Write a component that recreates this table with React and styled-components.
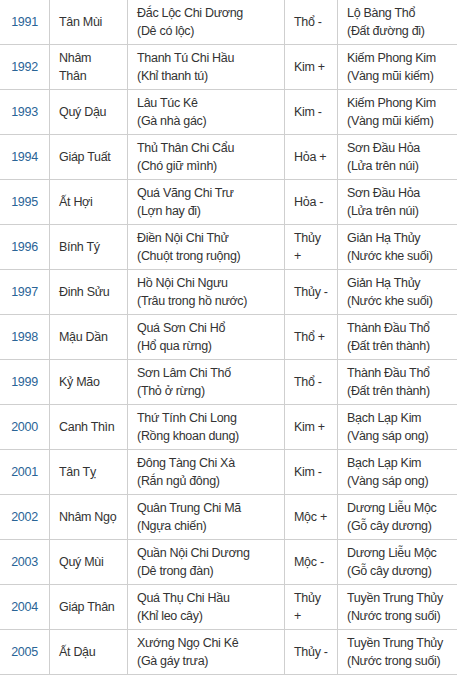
import styled, { createGlobalStyle } from "styled-components";

const GlobalStyle = createGlobalStyle`
  html, body {
    margin: 0;
    padding: 0;
    background: #fff;
    overflow: hidden;
  }
  body {
    font-family: "Liberation Sans", Arial, sans-serif;
  }
`;

const Page = styled.div`
  width: 457px;
  height: 676px;
  overflow: hidden;
`;

const Table = styled.table`
  border-collapse: collapse;
  table-layout: fixed;
  width: 480px;
  margin: -1px 0 0 -1px;
  font-size: 12.5px;
  letter-spacing: -0.3px;
  line-height: 18px;
  color: #333;
`;

const Col = styled.col`
  width: ${(p) => p.$w}px;
`;

const Cell = styled.td`
  border: 1px solid #cfcfcf;
  vertical-align: middle;
  height: 44px;
  padding: 0 8px 0 9px;
`;

const YearCell = styled(Cell)`
  text-align: center;
  color: #2a6496;
  padding: 0;
`;

const Line = styled.span`
  display: block;
  white-space: nowrap;
`;

const widths = [50, 78, 157, 53, 142];

const rows = [
  ["1991", ["Tân Mùi"], "Đắc Lộc Chi Dương", "Dê có lộc", ["Thổ -"], "Lộ Bàng Thổ", "Đất đường đi"],
  ["1992", ["Nhâm", "Thân"], "Thanh Tú Chi Hầu", "Khỉ thanh tú", ["Kim +"], "Kiếm Phong Kim", "Vàng mũi kiếm"],
  ["1993", ["Quý Dậu"], "Lâu Túc Kê", "Gà nhà gác", ["Kim -"], "Kiếm Phong Kim", "Vàng mũi kiếm"],
  ["1994", ["Giáp Tuất"], "Thủ Thân Chi Cẩu", "Chó giữ mình", ["Hỏa +"], "Sơn Đầu Hỏa", "Lửa trên núi"],
  ["1995", ["Ất Hợi"], "Quá Vãng Chi Trư", "Lợn hay đi", ["Hỏa -"], "Sơn Đầu Hỏa", "Lửa trên núi"],
  ["1996", ["Bính Tý"], "Điền Nội Chi Thử", "Chuột trong ruộng", ["Thủy", "+"], "Giản Hạ Thủy", "Nước khe suối"],
  ["1997", ["Đinh Sửu"], "Hồ Nội Chi Ngưu", "Trâu trong hồ nước", ["Thủy -"], "Giản Hạ Thủy", "Nước khe suối"],
  ["1998", ["Mậu Dần"], "Quá Sơn Chi Hổ", "Hổ qua rừng", ["Thổ +"], "Thành Đầu Thổ", "Đất trên thành"],
  ["1999", ["Kỷ Mão"], "Sơn Lâm Chi Thố", "Thỏ ở rừng", ["Thổ -"], "Thành Đầu Thổ", "Đất trên thành"],
  ["2000", ["Canh Thìn"], "Thứ Tính Chi Long", "Rồng khoan dung", ["Kim +"], "Bạch Lạp Kim", "Vàng sáp ong"],
  ["2001", ["Tân Tỵ"], "Đông Tàng Chi Xà", "Rắn ngủ đông", ["Kim -"], "Bạch Lạp Kim", "Vàng sáp ong"],
  ["2002", ["Nhâm Ngọ"], "Quân Trung Chi Mã", "Ngựa chiến", ["Mộc +"], "Dương Liễu Mộc", "Gỗ cây dương"],
  ["2003", ["Quý Mùi"], "Quần Nội Chi Dương", "Dê trong đàn", ["Mộc -"], "Dương Liễu Mộc", "Gỗ cây dương"],
  ["2004", ["Giáp Thân"], "Quá Thụ Chi Hầu", "Khỉ leo cây", ["Thủy", "+"], "Tuyền Trung Thủy", "Nước trong suối"],
  ["2005", ["Ất Dậu"], "Xướng Ngọ Chi Kê", "Gà gáy trưa", ["Thủy -"], "Tuyền Trung Thủy", "Nước trong suối"],
];

const App = () => {
  return (
    <Page>
      <GlobalStyle />
      <Table>
        <colgroup>
          {widths.map((w, i) => (
            <Col key={i} $w={w} />
          ))}
        </colgroup>
        <tbody>
          {rows.map(([year, canChi, name, nameNote, hanh, menh, menhNote]) => (
            <tr key={year}>
              <YearCell>{year}</YearCell>
              <Cell>
                {canChi.map((l) => (
                  <Line key={l}>{l}</Line>
                ))}
              </Cell>
              <Cell>
                <Line>{name}</Line>
                <Line>({nameNote})</Line>
              </Cell>
              <Cell>
                {hanh.map((l) => (
                  <Line key={l}>{l}</Line>
                ))}
              </Cell>
              <Cell>
                <Line>{menh}</Line>
                <Line>({menhNote})</Line>
              </Cell>
            </tr>
          ))}
        </tbody>
      </Table>
    </Page>
  );
};

export default App;
